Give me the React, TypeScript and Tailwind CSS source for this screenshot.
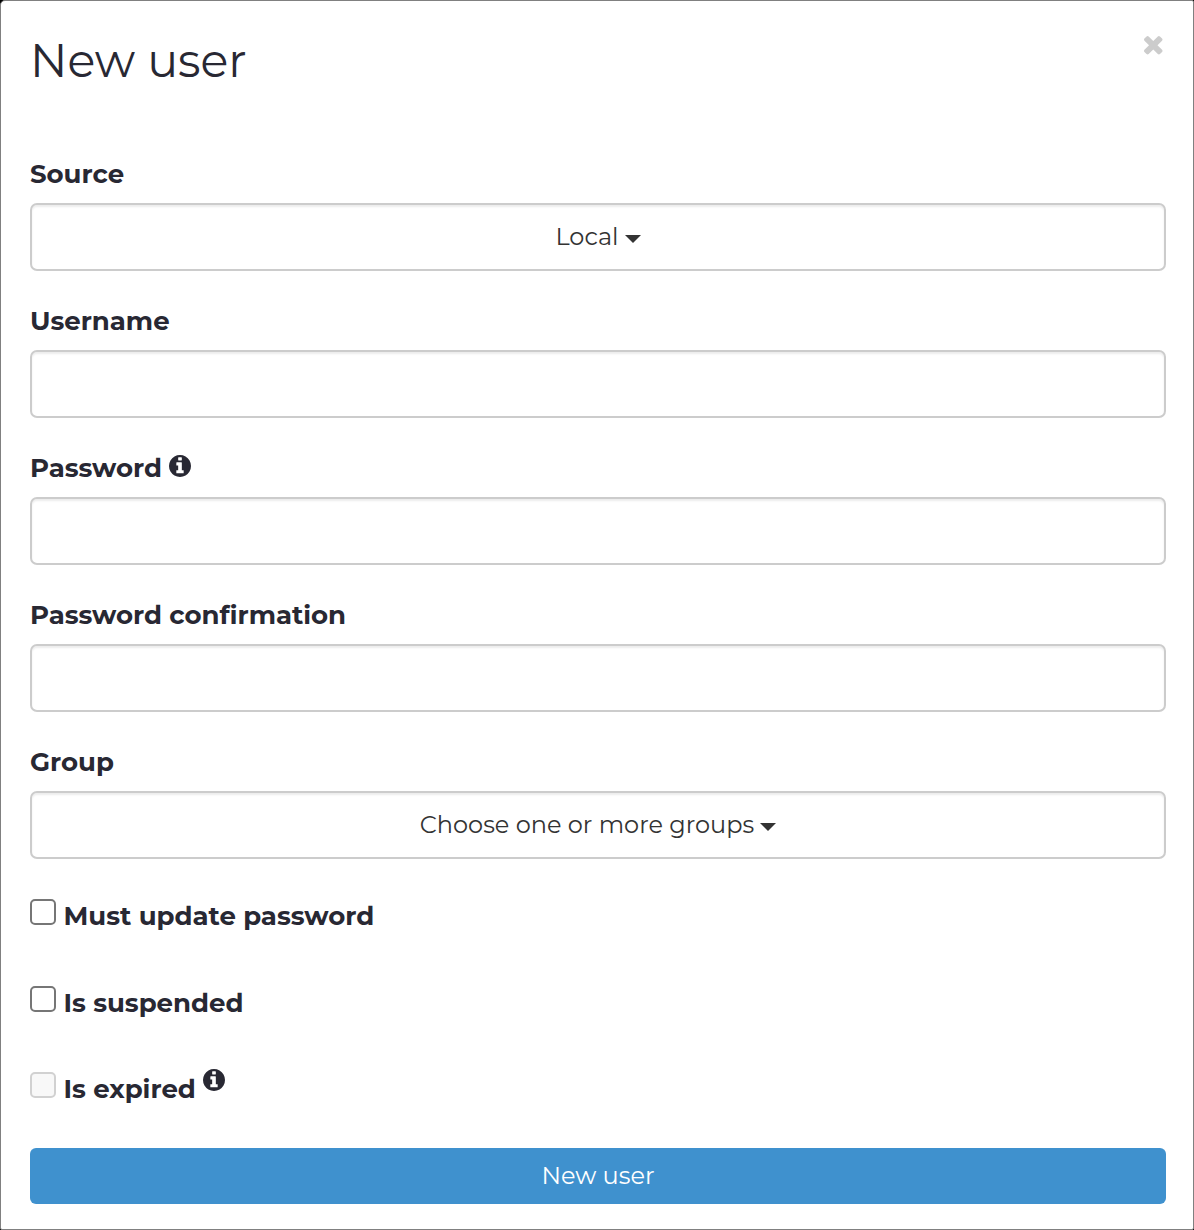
import type { ReactNode } from "react";

function InfoIcon({ className = "" }: { className?: string }) {
  return (
    <svg viewBox="128 128 1536 1536" fill="currentColor" className={`size-[22px] shrink-0 ${className}`}>
      <path d="M1152 1376v-160q0-14-9-23t-23-9h-96v-512q0-14-9-23t-23-9h-320q-14 0-23 9t-9 23v160q0 14 9 23t23 9h96v320h-96q-14 0-23 9t-9 23v160q0 14 9 23t23 9h448q14 0 23-9t9-23zm-128-896v-160q0-14-9-23t-23-9h-192q-14 0-23 9t-9 23v160q0 14 9 23t23 9h192q14 0 23-9t9-23zm640 416q0 209-103 385.5t-279.5 279.5-385.5 103-385.5-103-279.5-279.5-103-385.5 103-385.5 279.5-279.5 385.5-103 385.5 103 279.5 279.5 103 385.5z" />
    </svg>
  );
}

function CloseIcon() {
  return (
    <svg viewBox="302 366 1188 1188" fill="currentColor" className="size-[18.5px]">
      <path d="M1490 1322q0 40-28 68l-136 136q-28 28-68 28t-68-28l-294-294-294 294q-28 28-68 28t-68-28l-136-136q-28-28-28-68t28-68l294-294-294-294q-28-28-28-68t28-68l136-136q28-28 68-28t68 28l294 294 294-294q28-28 68-28t68 28l136 136q28 28 28 68t-28 68l-294 294 294 294q28 28 28 68z" />
    </svg>
  );
}

const control =
  "w-full h-[68px] block rounded-[7px] border-2 border-[#cccccc] bg-white shadow-[inset_0_2px_2px_rgba(0,0,0,0.075)]";

function Field({ label, info, children }: { label: string; info?: boolean; children: ReactNode }) {
  return (
    <div className="mb-[31px]">
      <div className="h-[38px] mb-[10px] flex items-center gap-[7px] text-[26px] leading-[38px] font-bold">
        {label}
        {info && <InfoIcon className="mb-[5px]" />}
      </div>
      {children}
    </div>
  );
}

function Dropdown({ text }: { text: string }) {
  return (
    <button className={`${control} text-2xl text-[#333333]`}>
      <span className="flex items-center justify-center gap-[6px]">
        {text}
        <span className="mt-[3px] border-x-8 border-t-8 border-x-transparent border-t-[#333333]" />
      </span>
    </button>
  );
}

function Check({ label, disabled, info }: { label: string; disabled?: boolean; info?: boolean }) {
  return (
    <label className="flex items-start text-[26px] leading-[38px] font-bold">
      <input
        type="checkbox"
        disabled={disabled}
        className="appearance-none size-[26px] mt-[2px] mr-[7.5px] shrink-0 rounded-[5px] border-2 border-[#767676] bg-white disabled:border-[#d1d1d1] disabled:bg-[#f8f8f8]"
      />
      {label}
      {info && <InfoIcon className="ml-[7px] -mt-[1px]" />}
    </label>
  );
}

export default function App() {
  return (
    <div className="w-[1194px] h-[1230px] bg-black font-['Montserrat','Inter',sans-serif] text-[#282833]">
      <div className="h-full pl-[29px] pr-[27px] rounded-[2px] rounded-tl-[5px] border border-[#808080] bg-white">
        <div className="h-[154px] flex items-start justify-between">
          <h1 className="pt-[32px] text-[46px] leading-[56px]">New user</h1>
          <button className="pt-[35px] pr-[3.5px] text-[#cccccc]">
            <CloseIcon />
          </button>
        </div>

        <Field label="Source">
          <Dropdown text="Local" />
        </Field>
        <Field label="Username">
          <input type="text" className={control} />
        </Field>
        <Field label="Password" info>
          <input type="password" className={control} />
        </Field>
        <Field label="Password confirmation">
          <input type="password" className={control} />
        </Field>
        <Field label="Group">
          <Dropdown text="Choose one or more groups" />
        </Field>

        <div className="pt-[7px]">
          <Check label="Must update password" />
          <div className="mt-[49px] mb-12">
            <Check label="Is suspended" />
          </div>
          <Check label="Is expired" disabled info />
        </div>

        <button className="w-full h-14 mt-10 rounded-md bg-[#3f91ce] text-2xl text-white">New user</button>
      </div>
    </div>
  );
}
